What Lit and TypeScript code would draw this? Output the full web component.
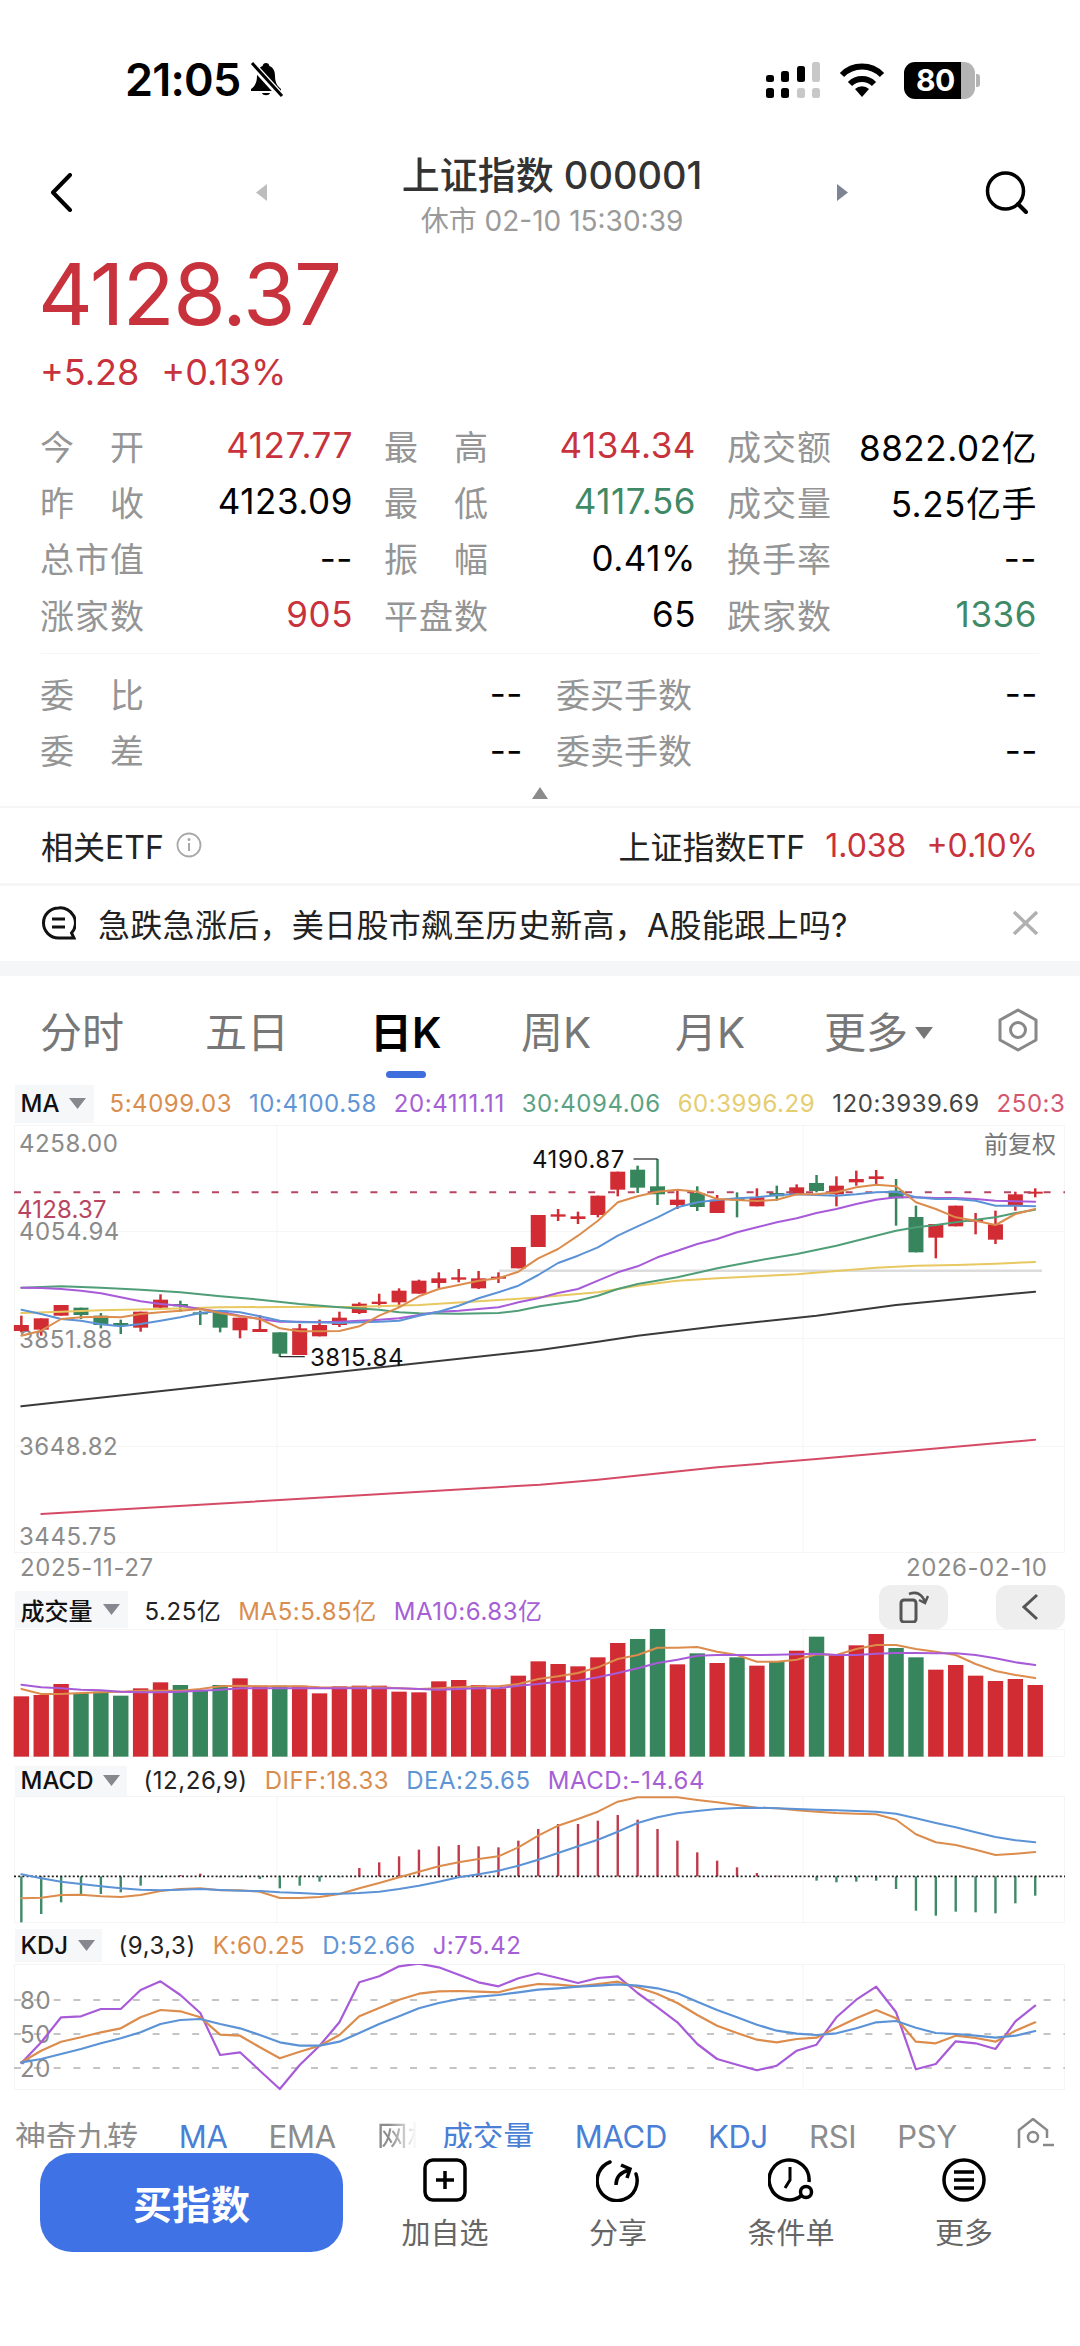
import { LitElement, html, css, svg } from "lit";
import { customElement } from "lit/decorators.js";

const R = "#d12c33", G = "#36855c", O = "#dc8c4c", B = "#5b93d6", P = "#a85bd8", GN = "#4f9e78", Y = "#e8c860", K = "#3a3a3a", C = "#d54b66";
const X = (i: number) => 21.35 + 19.88 * i;

// [dir, bodyTop, bodyBottom, wickTop, wickBottom], zoom coordinates (y*3)
const candles: [number, number, number, number, number][] = [
  [1,708,726,680,730],[1,688,722,688,740],[1,648,680,648,680],[0,656,678,656,690],[0,680,708,672,718],[0,702,710,692,735],
  [1,668,716,668,728],[1,632,656,616,660],[0,645,652,635,668],[0,670,674,665,708],[0,665,716,665,730],[1,686,724,686,748],
  [1,720,729,678,729],[0,730,794,730,804],[1,718,798,705,798],[1,708,742,692,742],[1,686,708,668,714],[1,644,672,640,675],
  [1,638,645,614,655],[1,605,640,598,655],[1,575,614,572,614],[1,568,582,550,598],[1,565,572,540,580],[1,568,598,546,600],
  [1,563,569,550,582],[1,474,538,474,538],[1,378,474,378,474],[1,376,383,360,396],[1,382,390,368,405],[1,320,378,320,385],
  [1,248,302,248,322],[0,242,296,230,312],[0,292,316,210,348],[1,332,348,305,360],[0,312,354,292,366],[1,332,372,318,372],
  [0,328,332,310,385],[1,325,352,298,352],[0,312,322,290,335],[1,295,315,286,315],[0,282,306,258,310],[1,290,316,262,352],
  [1,270,280,245,290],[1,262,270,243,285],[0,305,328,270,410],[0,384,490,350,490],[1,405,446,405,508],[1,350,412,350,412],
  [1,392,398,372,436],[1,406,452,365,465],[1,316,350,308,365],[1,308,314,298,325],
];
const ma5 = [740,725,690,685,683,685,675,670,665,660,672,682,690,718,727,727,726,712,680,655,622,600,588,575,568,548,508,480,440,395,340,322,308,302,308,330,333,336,332,316,316,310,295,287,292,340,360,385,395,408,375,360];
const ma10 = [662,675,690,695,706,712,705,695,685,672,665,670,682,695,700,700,702,700,698,695,680,668,650,628,610,590,558,522,500,475,440,412,385,355,340,333,328,325,318,316,318,320,316,310,308,325,330,330,335,350,350,352];
const ma20 = [596,597,600,605,613,625,637,645,650,660,668,680,690,698,698,700,698,695,692,688,678,668,665,660,655,640,628,612,600,575,550,532,505,485,465,450,430,415,400,388,372,360,345,332,325,325,327,327,330,335,337,338];
const ma30: [number, number][] = [[62,596],[120,594],[178,592],[293,596],[409,602],[524,610],[640,622],[755,632],[870,645],[986,655],[1101,662],[1159,670],[1217,673],[1332,674],[1448,672],[1505,665],[1568,652],[1678,635],[1736,620],[1794,600],[1852,585],[1967,565],[2083,538],[2198,515],[2314,495],[2429,470],[2544,440],[2602,425],[2660,415],[2718,408],[2776,400],[2833,392],[2891,385],[2949,372],[3006,362]];
const ma60: [number, number][] = [[62,672],[178,668],[293,664],[467,660],[640,655],[812,654],[1044,653],[1217,648],[1390,637],[1568,625],[1736,610],[1852,590],[1967,575],[2083,568],[2198,562],[2314,556],[2429,546],[2544,536],[2660,530],[2776,528],[2891,524],[3006,519]];
const ma120: [number, number][] = [[62,952],[1568,783],[1736,758],[1852,740],[2083,712],[2371,680],[2602,648],[3006,608]];
const ma250: [number, number][] = [[120,1275],[1568,1187],[1736,1172],[2083,1135],[2371,1110],[3006,1052]];

const volTops = [382,378,345,372,368,380,358,340,348,365,348,328,350,350,350,373,352,350,350,368,370,337,333,348,358,320,277,285,292,265,222,210,180,286,253,282,265,290,278,245,203,258,229,195,237,265,302,288,320,336,330,348];
const volO = [360,375,375,372,370,368,365,365,365,360,352,350,352,352,352,355,356,355,355,358,360,358,355,352,352,345,330,322,312,295,270,258,236,236,234,248,258,278,278,272,256,258,240,228,228,240,248,258,285,306,318,327];
const volP = [347,355,358,362,364,368,370,370,368,365,362,358,358,358,358,358,358,358,358,358,360,362,360,358,358,350,345,338,335,325,312,298,282,272,260,258,258,258,257,256,254,258,258,254,252,252,253,253,258,268,280,288];
const hist = [1060,1035,1000,978,975,970,950,925,918,914,925,925,930,958,950,938,925,897,880,862,842,832,828,832,835,815,780,765,765,755,738,752,780,815,850,875,895,912,920,922,935,940,938,935,960,1025,1040,1028,1030,1033,1003,980];
const diff = [988,986,978,977,982,984,978,966,960,958,964,964,968,987,987,984,975,958,942,925,908,892,880,870,862,835,800,770,750,728,698,685,685,685,693,700,708,716,718,724,728,732,734,736,752,796,820,828,842,858,854,849];
const dea = [916,928,938,945,952,958,962,964,962,960,963,965,966,970,972,975,974,972,968,960,950,938,925,916,905,890,872,852,832,812,788,762,745,733,726,720,717,716,718,720,722,724,726,728,734,748,762,775,790,804,814,820];
const kK = [400,365,338,325,310,298,265,243,247,265,317,320,355,388,368,350,318,262,237,212,194,187,186,188,190,175,165,167,172,165,158,175,195,222,258,290,312,332,340,330,326,296,268,243,268,338,343,320,327,338,305,280];
const kD = [400,390,375,360,343,328,310,285,273,270,285,298,318,340,350,350,338,312,285,262,238,222,210,203,198,190,182,178,173,170,166,170,178,193,218,243,265,287,305,314,318,313,298,280,276,296,312,315,320,326,320,306];
const kJ = [402,340,265,262,240,240,183,157,198,252,378,370,425,480,408,350,280,160,142,112,104,115,137,160,172,148,133,147,162,147,142,192,235,280,345,390,407,424,410,365,347,265,212,173,250,421,405,337,343,360,277,230];

const line = (ys: number[], off: number) => ys.map((z, i) => `${X(i).toFixed(1)},${(z / 3 - off).toFixed(1)}`).join(" ");
const sparse = (p: [number, number][], off: number) => p.map(([x, z]) => `${(x / 2.904).toFixed(1)},${(z / 3 - off).toFixed(1)}`).join(" ");
const pl = (points: string, color: string, w = 2) => svg`<polyline points=${points} fill="none" stroke=${color} stroke-width=${w} stroke-linejoin="round" stroke-linecap="round"></polyline>`;
const frame = (h: number) => svg`
  <rect x="14.5" y="0.5" width="1050" height=${h} fill="none" stroke="#f5f5f5"></rect>
  <line x1="277" x2="277" y1="0" y2=${h} stroke="#f5f5f5"></line>
  <line x1="803" x2="803" y1="0" y2=${h} stroke="#f5f5f5"></line>`;

@customElement("app-root")
export class AppRoot extends LitElement {
  static styles = css`
    :host { display: block; width: 1080px; height: 2346px; overflow: hidden; background: #fff; position: relative; font-family: Inter, "Noto Sans CJK SC", sans-serif; color: #000; }
    * { box-sizing: border-box; }
    svg { display: block; }
    .status { height: 150px; padding: 60px 100px 50px 125px; display: flex; align-items: center; }
    .time { font-size: 45px; font-weight: 600; line-height: 40px; letter-spacing: -0.8px; width: 124px; }
    .status-right { margin-left: auto; display: flex; align-items: center; }
    .wifi { margin-left: 19px; }
    .battery-wrap { margin-left: 19px; display: flex; align-items: center; }
    .battery { width: 71px; height: 37px; border-radius: 11px; background: linear-gradient(90deg, #000 57px, #b4b4b4 57px); color: #fff; font-size: 30px; font-weight: 700; line-height: 37px; padding-left: 12px; letter-spacing: -0.5px; }
    .nub { width: 4px; height: 13px; margin-left: 1px; background: #b4b4b4; border-radius: 0 3px 3px 0; }

    .nav { height: 95px; display: flex; align-items: flex-start; padding-left: 50px; }
    .back { margin-top: 23px; }
    .tri-l { margin: 34px 85px 0 184px; }
    .title-block { width: 400px; text-align: center; }
    .title { font-size: 38px; line-height: 50px; color: #333; font-weight: 500; }
    .sub { font-size: 28px; line-height: 32px; margin-top: 5px; color: #9a9a9a; }
    .tri-r { margin: 34px 137px 0 85px; }
    .search { margin-top: 21px; }

    .price { padding: 5px 0 0 38px; font-size: 85px; line-height: 90px; height: 95px; color: #c8323c; letter-spacing: -1.5px; }
    .change { padding: 12px 0 0 40px; height: 77px; font-size: 36px; line-height: 40px; color: #c8323c; display: flex; gap: 22px; }

    .stats { display: grid; grid-template-columns: 313px 312px 310px; column-gap: 31px; padding-left: 40px; }
    .cell { display: flex; justify-content: space-between; height: 56.33px; align-items: center; font-size: 35px; }
    .lab { width: 104px; display: flex; justify-content: space-between; font-size: 34px; color: #959595; }
    .val { letter-spacing: 0.55px; }
    .red { color: #c8323c; }
    .green { color: #3f8a66; }
    .hr { height: 1px; margin: 11px 41px 11px; background: #f6f6f6; }
    .stats2 { display: grid; grid-template-columns: 483px 482px; column-gap: 33px; padding-left: 40px; }
    .lab4 { font-size: 34px; color: #959595; }
    .collapse { height: 28px; padding-top: 9px; display: flex; justify-content: center; }
    .etf { height: 80px; border-top: 2px solid #f6f6f6; border-bottom: 3px solid #f6f6f6; display: flex; align-items: center; padding: 0 42px 0 41px; font-size: 32px; color: #222; }
    .etf-info { margin-left: 12px; }
    .etf-right { margin-left: auto; display: flex; align-items: center; }
    .etf-num { color: #c8323c; margin-left: 20px; }
    .news { height: 75px; display: flex; align-items: center; padding: 0 41px; font-size: 32px; color: #222; }
    .news-text { margin-left: 22px; white-space: nowrap; letter-spacing: 0.3px; }
    .news-x { margin-left: auto; }
    .band { height: 15px; background: #f5f6f8; }

    .tabs { height: 109px; display: grid; grid-template-columns: 165px 165px 151px 154px 149px 173px 42px; padding: 6px 0 0 40px; align-items: center; font-size: 42px; color: #777; }
    .tab { position: relative; line-height: 60px; white-space: nowrap; }
    .tab.on { color: #000; font-weight: 600; }
    .tab.on::after { content: ""; position: absolute; left: 16px; top: 68px; width: 40px; height: 7px; border-radius: 4px; background: #3f6fdc; }
    .more { display: flex; align-items: center; gap: 7px; }
    .hex { margin-top: -6px; }

    .head { display: flex; align-items: center; font-size: 24px; white-space: nowrap; overflow: hidden; letter-spacing: 0.55px; }
    .chip { display: flex; align-items: center; background: #f6f7f9; padding-left: 6px; font-weight: 500; color: #111; letter-spacing: 0; }
    .h-ma { height: 40px; width: 1066px; padding: 0 0 2px 14.5px; gap: 17px; }
    .h-ma .chip { width: 79px; height: 38px; font-size: 24px; gap: 10px; margin-right: -1px; flex: none; }
    .h-vol { height: 38px; padding-left: 14.5px; width: 1080px; overflow: visible; position: relative; }
    .h-vol .chip { width: 113px; height: 37px; gap: 10px; font-size: 24px; }
    .h-macd { height: 37px; padding: 7px 0 0 14.5px; }
    .h-macd .chip { width: 112px; height: 30px; gap: 10px; font-size: 24px; }
    .h-kdj { height: 40px; padding: 5px 0 2px 14.5px; }
    .h-kdj .chip { width: 87px; height: 33px; gap: 10px; font-size: 24px; }
    .o { color: #d98e50; } .b { color: #5f95d4; } .p { color: #a660d6; } .gn { color: #5aa283; } .y { color: #e4cd72; } .k { color: #444; } .c { color: #d4566f; } .t { color: #222; }
    .ml17 { margin-left: 17px; }
    .first { margin-left: 17px; }
    .btn { width: 69px; height: 44px; border-radius: 12px; background: #eee; display: flex; align-items: center; justify-content: center; }
    .btns { margin-left: auto; margin-right: 15px; display: flex; gap: 48px; margin-top: -6px; }
    .ax { font: 24px Inter, sans-serif; fill: #8b8b8b; letter-spacing: 0.55px; }
    .axr { font: 24px Inter, sans-serif; fill: #b8455f; letter-spacing: 0.2px; }
    .mk { font: 24px Inter, sans-serif; fill: #111; letter-spacing: 0.55px; }
    .fq { font: 24px "Noto Sans CJK SC", sans-serif; fill: #777; }

    .inds { height: 54px; display: flex; align-items: center; padding: 31px 0 0 15px; gap: 41px; font-size: 31px; color: #8c8c8c; overflow: hidden; white-space: nowrap; line-height: 45px; letter-spacing: -0.3px; }
    .inds .on { color: #4a7fd6; }
    .fade { width: 40px; overflow: hidden; -webkit-mask-image: linear-gradient(to right, #000 30%, transparent); mask-image: linear-gradient(to right, #000 30%, transparent); margin-right: -16px; flex: none; }
    .ind-icon { margin: -6px 0 0 18px; flex: none; }
    .footer { height: 197px; display: flex; padding: 5px 0 0 40px; background: #fff; position: relative; }
    .buy { width: 303px; height: 99px; border-radius: 32px; background: #3f72e5; color: #fff; font-size: 39px; font-weight: 700; display: flex; align-items: center; justify-content: center; margin-right: 15.5px; }
    .act { width: 173px; display: flex; flex-direction: column; align-items: center; padding-top: 5px; font-size: 29px; color: #666; }
    .act span { margin-top: 12px; line-height: 40px; }
  `;

  render() {
    const stat = (l: string, v: string, cls = "") => html`<div class="cell"><span class="lab">${l.split("").map((c) => c === " " ? "" : html`<span>${c}</span>`)}</span><span class="val ${cls}">${v}</span></div>`;
    const tri = html`<svg width="17" height="11" viewBox="0 0 17 11"><path d="M0 0H17L8.5 11Z" fill="#87878f"/></svg>`;
    return html`
      <div class="status">
        <div class="time">21:05</div>
        <svg width="35" height="36" viewBox="0 0 35 36"><path d="M17 1c-2 0-3 1-3.4 3C9 6 8 10 8 14c0 6-2 10-6 13v2h30v-2c-4-3-6-7-6-13 0-4-1-8-5.600-10C20 2 19 1 17 1Z" fill="#000"/><path d="M13 31c1 3 7 3 8 0Z" fill="#000"/><path d="M2 1 33 35" stroke="#fff" stroke-width="7"/><path d="M3 1 33 34" stroke="#000" stroke-width="3"/></svg>
        <div class="status-right">
          <svg width="54" height="36" viewBox="0 0 54 36">
            <g fill="#000"><rect x="0" y="13" width="8" height="7" rx="2.500"/><rect x="15" y="9" width="8" height="11" rx="2.500"/><rect x="31" y="4" width="8" height="16" rx="2.500"/><rect x="0" y="26" width="8" height="10" rx="2.500"/><rect x="15" y="26" width="8" height="10" rx="2.500"/></g>
            <g fill="#c8c8c8"><rect x="46" y="0" width="8" height="20" rx="2.500"/><rect x="31" y="26" width="8" height="10" rx="2.500"/><rect x="46" y="26" width="8" height="10" rx="2.500"/></g>
          </svg>
          <svg class="wifi" width="46" height="34" viewBox="0 0 46 34"><path d="M23 34 16 26a10 10 0 0 1 14 0Z" fill="#000"/><path d="M11 21a17 17 0 0 1 24 0" fill="none" stroke="#000" stroke-width="6"/><path d="M3 12a28 28 0 0 1 40 0" fill="none" stroke="#000" stroke-width="6"/></svg>
          <div class="battery-wrap"><div class="battery">80</div><div class="nub"></div></div>
        </div>
      </div>

      <div class="nav">
        <svg class="back" width="22" height="39" viewBox="0 0 22 39"><path d="M20 2 3 19.500 20 37" fill="none" stroke="#000" stroke-width="4" stroke-linecap="round" stroke-linejoin="round"/></svg>
        <svg class="tri-l" width="11" height="17" viewBox="0 0 11 17"><path d="M11 0V17L0 8.500Z" fill="#bdbdbd"/></svg>
        <div class="title-block"><div class="title">上证指数 000001</div><div class="sub">休市 02-10 15:30:39</div></div>
        <svg class="tri-r" width="11" height="17" viewBox="0 0 11 17"><path d="M0 0V17L11 8.500Z" fill="#7f8494"/></svg>
        <svg class="search" width="43" height="43" viewBox="0 0 43 43"><circle cx="20.500" cy="20" r="18" fill="none" stroke="#000" stroke-width="3.500"/><path d="M33 33 41 41" stroke="#000" stroke-width="4" stroke-linecap="round"/></svg>
      </div>

      <div class="price">4128.37</div>
      <div class="change"><span>+5.28</span><span>+0.13%</span></div>

      <div class="stats">
        ${stat("今 开", "4127.77", "red")}${stat("最 高", "4134.34", "red")}${stat("成交额", "8822.02亿")}
        ${stat("昨 收", "4123.09")}${stat("最 低", "4117.56", "green")}${stat("成交量", "5.25亿手")}
        ${stat("总市值", "--")}${stat("振 幅", "0.41%")}${stat("换手率", "--")}
        ${stat("涨家数", "905", "red")}${stat("平盘数", "65")}${stat("跌家数", "1336", "green")}
      </div>
      <div class="hr"></div>
      <div class="stats2">
        ${stat("委 比", "--")}<div class="cell"><span class="lab4">委买手数</span><span class="val">--</span></div>
        ${stat("委 差", "--")}<div class="cell"><span class="lab4">委卖手数</span><span class="val">--</span></div>
      </div>
      <div class="collapse"><svg width="16" height="12" viewBox="0 0 16 12"><path d="M8 0 16 12H0Z" fill="#8b8b8b"/></svg></div>

      <div class="etf">
        <span>相关ETF</span>
        <svg class="etf-info" width="26" height="26" viewBox="0 0 26 26"><circle cx="13" cy="13" r="11.500" fill="none" stroke="#a8a8a8" stroke-width="1.800"/><circle cx="13" cy="7.500" r="1.500" fill="#a8a8a8"/><path d="M13 11v8" stroke="#a8a8a8" stroke-width="2"/></svg>
        <div class="etf-right"><span>上证指数ETF</span><span class="etf-num">1.038</span><span class="etf-num">+0.10%</span></div>
      </div>
      <div class="news">
        <svg width="35" height="34" viewBox="0 0 35 34"><path d="M17.500 2a15 15 0 1 0 0 30H33l-2.500-5A15 15 0 0 0 17.500 2Z" fill="none" stroke="#111" stroke-width="3"/><path d="M11 13h13M11 21h13" stroke="#111" stroke-width="3"/></svg>
        <span class="news-text">急跌急涨后，美日股市飙至历史新高，A股能跟上吗?</span>
        <svg class="news-x" width="27" height="24" viewBox="0 0 27 24"><path d="M2 1 25 23M25 1 2 23" stroke="#b0b0b0" stroke-width="3.500"/></svg>
      </div>
      <div class="band"></div>

      <div class="tabs">
        <div class="tab">分时</div><div class="tab">五日</div><div class="tab on">日K</div><div class="tab">周K</div><div class="tab">月K</div>
        <div class="tab more">更多<svg width="18" height="12" viewBox="0 0 18 12"><path d="M0 0H18L9 12Z" fill="#777"/></svg></div>
        <svg class="hex" width="42" height="44" viewBox="0 0 42 44"><path d="M21 2 39 12V32L21 42 3 32V12Z" fill="none" stroke="#888" stroke-width="3" stroke-linejoin="round"/><circle cx="21" cy="22" r="7.500" fill="none" stroke="#888" stroke-width="3"/></svg>
      </div>

      <div class="head h-ma">
        <div class="chip">MA${tri}</div>
        <span class="o">5:4099.03</span><span class="b">10:4100.58</span><span class="p">20:4111.11</span><span class="gn">30:4094.06</span><span class="y">60:3996.29</span><span class="k">120:3939.69</span><span class="c">250:3</span>
      </div>
      ${this.mainPane()}

      <div class="head h-vol">
        <div class="chip">成交量${tri}</div>
        <span class="t first">5.25亿</span><span class="o ml17">MA5:5.85亿</span><span class="p ml17">MA10:6.83亿</span>
        <div class="btns">
          <div class="btn"><svg width="30" height="32" viewBox="0 0 30 32"><rect x="2" y="9" width="15" height="22" rx="3" fill="none" stroke="#555" stroke-width="3"/><path d="M10 3c8-3 13 0 16 8M20 9l6 3 3-7" fill="none" stroke="#555" stroke-width="2.500"/></svg></div>
          <div class="btn"><svg width="17" height="28" viewBox="0 0 17 28"><path d="M15 2 2 14 15 26" fill="none" stroke="#555" stroke-width="3"/></svg></div>
        </div>
      </div>
      ${this.volPane()}

      <div class="head h-macd">
        <div class="chip">MACD${tri}</div>
        <span class="t first">(12,26,9)</span><span class="o ml17">DIFF:18.33</span><span class="b ml17">DEA:25.65</span><span class="p ml17">MACD:-14.64</span>
      </div>
      ${this.macdPane()}

      <div class="head h-kdj">
        <div class="chip">KDJ${tri}</div>
        <span class="t first">(9,3,3)</span><span class="o ml17">K:60.25</span><span class="b ml17">D:52.66</span><span class="p ml17">J:75.42</span>
      </div>
      ${this.kdjPane()}

      <div class="inds">
        <span>神奇九转</span><span class="on">MA</span><span>EMA</span><span class="fade">网格</span><span class="on">成交量</span><span class="on">MACD</span><span class="on">KDJ</span><span>RSI</span><span>PSY</span>
        <svg class="ind-icon" width="38" height="30" viewBox="0 0 38 30"><path d="M3 30V12L17 1 31 12V20" fill="none" stroke="#888" stroke-width="2.500"/><circle cx="17" cy="19" r="5" fill="none" stroke="#888" stroke-width="2.500"/><path d="M27 27H38" stroke="#888" stroke-width="2.500"/></svg>
      </div>
      <div class="footer">
        <div class="buy">买指数</div>
        <div class="act"><svg width="44" height="44" viewBox="0 0 44 44"><rect x="2" y="2" width="40" height="40" rx="8" fill="none" stroke="#000" stroke-width="3.500"/><path d="M22 13V31M13 22H31" stroke="#000" stroke-width="3.500"/></svg><span>加自选</span></div>
        <div class="act"><svg width="44" height="44" viewBox="0 0 44 44"><path d="M14 4A20 20 0 1 0 40 16" fill="none" stroke="#000" stroke-width="3.500" stroke-linecap="round"/><path d="M20 27c0-8 5-13 13-15M25 7l9 4-3 9" fill="none" stroke="#000" stroke-width="3.500"/></svg><span>分享</span></div>
        <div class="act"><svg width="46" height="44" viewBox="0 0 46 44"><path d="M33 38A20 20 0 1 1 41 24" fill="none" stroke="#000" stroke-width="3.500"/><path d="M22 9V22L17 30" fill="none" stroke="#000" stroke-width="3"/><circle cx="38" cy="34" r="5.500" fill="none" stroke="#000" stroke-width="3.500"/></svg><span>条件单</span></div>
        <div class="act"><svg width="44" height="44" viewBox="0 0 44 44"><circle cx="22" cy="22" r="20" fill="none" stroke="#000" stroke-width="3.500"/><path d="M12 14H32M12 22H32M12 30H32" stroke="#000" stroke-width="3.500"/></svg><span>更多</span></div>
      </div>
    `;
  }

  mainPane() {
    const off = 36; // pane starts at y=1126; z/3 - 36
    const gy = (z: number) => z / 3 - off;
    return html`<svg width="1080" height="466" viewBox="0 0 1080 466">
      ${frame(427)}
      ${[428, 748, 1072].map((z) => svg`<line x1="14" x2="1065" y1=${gy(z)} y2=${gy(z)} stroke="#f5f5f5"></line>`)}
      <line x1="499" x2="1042" y1=${gy(545)} y2=${gy(545)} stroke="#dcdcdc" stroke-width="2.500"></line>
      <text class="ax" x="19" y=${gy(163) + 8.5}>4258.00</text>
      <text class="ax" x="19" y=${gy(428) + 8.5}>4054.94</text>
      <text class="ax" x="19" y=${gy(750) + 8.5}>3851.88</text>
      <text class="ax" x="19" y=${gy(1072) + 8.5}>3648.82</text>
      <text class="ax" x="19" y=${gy(1342) + 8.5}>3445.75</text>
      <text class="axr" x="17" y=${gy(362) + 8.5}>4128.37</text>
      <text class="fq" x="984" y=${gy(165) + 8.5}>前复权</text>
      ${candles.map(([d, t, b, wt, wb], i) => { const c = d ? R : G; return svg`
        <line x1=${X(i)} x2=${X(i)} y1=${gy(wt)} y2=${gy(wb)} stroke=${c} stroke-width="2.500"></line>
        <rect x=${X(i) - 7.5} y=${gy(t)} width="15" height=${Math.max((b - t) / 3, 2)} fill=${c}></rect>`; })}
      <line x1="14" x2="1065" y1=${gy(310)} y2=${gy(310)} stroke="#b8455f" stroke-width="2" stroke-dasharray="7 12.800"></line>
      ${pl(sparse(ma250, off), C)}${pl(sparse(ma120, off), K)}${pl(sparse(ma60, off), Y)}${pl(sparse(ma30, off), GN)}
      ${pl(line(ma20, off), P)}${pl(line(ma10, off), B)}${pl(line(ma5, off), O)}
      <path d=${`M${X(32)} ${gy(210)}H${X(32) - 24}`} stroke="#222" stroke-width="1.200" fill="none"></path>
      <text class="mk" x="532" y=${gy(212) + 8.5}>4190.87</text>
      <path d=${`M${X(13)} ${gy(803)}H${X(13) + 25}`} stroke="#222" stroke-width="1.200" fill="none"></path>
      <text class="mk" x="310" y=${gy(805) + 8.5}>3815.84</text>
      <text class="ax" x="20" y="451">2025-11-27</text>
      <text class="ax" x="906" y="451">2026-02-10</text>
    </svg>`;
  }

  volPane() {
    const off = 60;
    return html`<svg width="1080" height="130" viewBox="0 0 1080 130">
      ${frame(127)}
      ${volTops.map((z, i) => svg`<rect x=${X(i) - 7.7} y=${z / 3 - off} width="15.400" height=${563 / 3 - z / 3} fill=${candles[i][0] ? R : G}></rect>`)}
      ${pl(line(volO, off), O)}${pl(line(volP, off), P)}
    </svg>`;
  }

  macdPane() {
    const off = 227;
    const zero = 922 / 3 - off;
    return html`<svg width="1080" height="128" viewBox="0 0 1080 128">
      ${frame(126)}
      ${hist.map((z, i) => svg`<line x1=${X(i)} x2=${X(i)} y1=${zero} y2=${z / 3 - off} stroke=${z < 921 ? "#bf3a4a" : "#3f8a66"} stroke-width="2.400"></line>`)}
      <line x1="14" x2="1065" y1=${zero} y2=${zero} stroke="#222" stroke-width="1.800" stroke-dasharray="2 2.200"></line>
      ${pl(line(diff, off), O)}${pl(line(dea, off), B)}
    </svg>`;
  }

  kdjPane() {
    const off = 35;
    return html`<svg width="1080" height="130" viewBox="0 0 1080 130">
      ${frame(125)}
      ${[213, 315, 417].map((z) => svg`<line x1="14" x2="1065" y1=${z / 3 - off} y2=${z / 3 - off} stroke="#c4c4c4" stroke-width="2" stroke-dasharray="7 12.800"></line>`)}
      <text class="ax" x="20" y=${213 / 3 - off + 9}>80</text>
      <text class="ax" x="20" y=${315 / 3 - off + 9}>50</text>
      <text class="ax" x="20" y=${417 / 3 - off + 9}>20</text>
      ${pl(line(kJ, off), P, 2.2)}${pl(line(kK, off), O, 2.2)}${pl(line(kD, off), B, 2.2)}
    </svg>`;
  }
}
